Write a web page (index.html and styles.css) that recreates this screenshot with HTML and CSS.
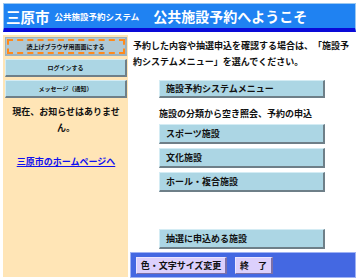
FILE: index.html
```html
<!DOCTYPE html>
<html lang="ja">
<head>
<meta charset="utf-8">
<title>公共施設予約へようこそ</title>
<link rel="stylesheet" href="styles.css">
</head>
<body>
<div class="page">
  <header class="header">
    <span class="city">三原市</span>
    <span class="system">公共施設予約システム</span>
    <span class="welcome">公共施設予約へようこそ</span>
  </header>
  <div class="main">
    <aside class="side">
      <button class="side-btn focused">読上げブラウザ用画面にする</button>
      <button class="side-btn">ログインする</button>
      <button class="side-btn">メッセージ（通知）</button>
      <p class="notice">現在、お知らせはありません。</p>
      <p class="home"><a href="#">三原市のホームページへ</a></p>
    </aside>
    <section class="content">
      <p class="intro">予約した内容や抽選申込を確認する場合は、「施設予約システムメニュー」を選んでください。</p>
      <div class="menu">
        <button class="menu-btn short">施設予約システムメニュー</button>
        <p class="label">施設の分類から空き照会、予約の申込</p>
        <button class="menu-btn first">スポーツ施設</button>
        <button class="menu-btn">文化施設</button>
        <button class="menu-btn">ホール・複合施設</button>
        <button class="menu-btn lottery">抽選に申込める施設</button>
      </div>
      <div class="footer">
        <button class="foot-btn color">色・文字サイズ変更</button>
        <button class="foot-btn end">終　了</button>
      </div>
    </section>
  </div>
</div>
</body>
</html>
```
FILE: styles.css
```css
* { box-sizing: border-box; }
html, body { margin: 0; padding: 0; background: #ffffff; }
body {
  font-family: "Noto Sans CJK JP", "Noto Sans", sans-serif;
  color: #111;
  text-spacing-trim: space-all;
}
.page {
  width: 360px;
  padding: 3px 4px 0 3px;
}
.header {
  height: 29px;
  background: #1f82f2;
  border: 1px solid #9cc8f0;
  border-bottom: 4px solid #0a0ad8;
  color: #fff;
  display: flex;
  align-items: center;
  padding-left: 2px;
  white-space: nowrap;
  font-weight: bold;
}
.city { font-size: 14.5px; }
.system { font-size: 8.5px; margin-left: 5px; }
.welcome { font-size: 14px; margin-left: 14px; }

.main {
  display: grid;
  grid-template-columns: 125px 226px;
  column-gap: 2px;
  margin-top: 3px;
}
.side {
  background: #ffe5b6;
  height: 242px;
  padding: 2px 1px 0 2px;
  display: flex;
  flex-direction: column;
  align-items: stretch;
}
.side-btn {
  font-family: inherit;
  font-weight: bold;
  font-size: 6px;
  color: #111;
  height: 18px;
  margin: 0 0 3px 0;
  padding: 0;
  background: #acd6e4;
  border: 1px solid #d4ecf4;
  border-right: 2px solid #6e7f88;
  border-bottom: 2px solid #6e7f88;
  text-align: center;
  text-spacing-trim: space-all;
}
.side-btn.focused {
  height: 19px;
  background: #b0c8d4;
  border-color: #9fb2bc;
  outline: 2px dashed #ff8a1c;
  outline-offset: -4px;
}
.notice {
  margin: 3px 6px 0 6px;
  font-size: 9px;
  font-weight: bold;
  line-height: 16px;
  text-align: center;
}
.home {
  margin: 18px 0 0 0;
  font-size: 9px;
  font-weight: bold;
  line-height: 16px;
  text-align: center;
}
.home a { color: #1010ee; }

.content {
  display: flex;
  flex-direction: column;
}
.intro {
  margin: 3px 0 0 3px;
  font-size: 9px;
  font-weight: bold;
  line-height: 16px;
}
.menu {
  margin-left: 29px;
  display: flex;
  flex-direction: column;
  align-items: flex-start;
}
.menu-btn {
  font-family: inherit;
  font-weight: bold;
  font-size: 9px;
  color: #111;
  width: 166px;
  height: 20px;
  margin: 0 0 4px 0;
  padding: 0 0 0 6px;
  text-align: left;
  background: #acd6e4;
  border: 1px solid #d4ecf4;
  border-right: 2px solid #6e7f88;
  border-bottom: 2px solid #6e7f88;
}
.menu-btn.short { height: 18px; margin-top: 10px; margin-bottom: 8px; }
.label {
  margin: 0 0 2px 0;
  font-size: 9px;
  font-weight: bold;
  line-height: 16px;
}
.menu-btn.lottery { margin-top: 33px; margin-bottom: 3px; }
.footer {
  height: 26px;
  background: #4468e2;
  border: 1px solid #9fb2f4;
  display: flex;
  align-items: center;
  gap: 8px;
  padding-left: 5px;
}
.foot-btn {
  font-family: inherit;
  font-weight: bold;
  font-size: 9px;
  color: #111;
  height: 17px;
  padding: 0;
  background: #dcd0fc;
  border: 1px solid #ece6ff;
  border-right: 2px solid #7c70a8;
  border-bottom: 1px solid #7c70a8;
}
.foot-btn.color { width: 91px; }
.foot-btn.end { width: 38px; }
```
